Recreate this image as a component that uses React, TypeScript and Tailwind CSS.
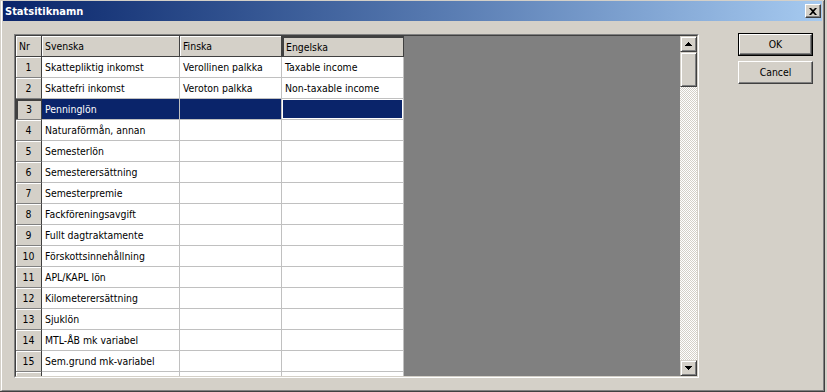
import React from "react";

const rows: [number, string, string, string][] = [
  [1, "Skattepliktig inkomst", "Verollinen palkka", "Taxable income"],
  [2, "Skattefri inkomst", "Veroton palkka", "Non-taxable income"],
  [3, "Penninglön", "", ""],
  [4, "Naturaförmån, annan", "", ""],
  [5, "Semesterlön", "", ""],
  [6, "Semesterersättning", "", ""],
  [7, "Semesterpremie", "", ""],
  [8, "Fackföreningsavgift", "", ""],
  [9, "Fullt dagtraktamente", "", ""],
  [10, "Förskottsinnehållning", "", ""],
  [11, "APL/KAPL lön", "", ""],
  [12, "Kilometerersättning", "", ""],
  [13, "Sjuklön", "", ""],
  [14, "MTL-ÅB mk variabel", "", ""],
  [15, "Sem.grund mk-variabel", "", ""],
  [16, "", "", ""],
];

function ScrollBtn({ dir }: { dir: "up" | "down" }) {
  return (
    <div className="w-[17px] h-[16px] bg-[#d4d0c8] border border-t-[#d4d0c8] border-l-[#d4d0c8] border-r-[#404040] border-b-[#404040] shadow-[inset_1px_1px_0_#fff,inset_-1px_-1px_0_#808080] flex items-center justify-center">
      <svg width="7" height="4" viewBox="0 0 7 4">
        {dir === "up" ? (
          <path d="M3 0h1v1h1v1h1v1h1v1H0V3h1V2h1V1h1z" fill="#000" />
        ) : (
          <path d="M0 0h7v1H6v1H5v1H4v1H3V3H2V2H1V1H0z" fill="#000" />
        )}
      </svg>
    </div>
  );
}

function Grid() {
  return (
    <div className="w-[685px] h-[344px] border-l border-t border-l-[#808080] border-t-[#808080] border-r border-b border-r-white border-b-white">
      <div className="w-full h-full border-l border-t border-l-[#404040] border-t-[#404040] border-r border-b border-r-[#d4d0c8] border-b-[#d4d0c8] flex">
        <div className="flex-1 h-full flex overflow-hidden">
          <div className="w-[388px] h-full overflow-hidden flex flex-col bg-white">
            <div className="flex h-[21px] shrink-0 text-black">
              <div className="w-[26px] h-full bg-[#d4d0c8] border-r border-b border-[#404040] shadow-[inset_1px_1px_0_#fff] flex items-center pl-[3px]">Nr</div>
              <div className="w-[138px] h-full bg-[#d4d0c8] border-r border-b border-[#404040] shadow-[inset_1px_1px_0_#fff] flex items-center pl-[3px]">Svenska</div>
              <div className="w-[102px] h-full bg-[#d4d0c8] border-r border-b border-[#404040] shadow-[inset_1px_1px_0_#fff] flex items-center pl-[3px]">Finska</div>
              <div className="w-[122px] h-full bg-[#d4d0c8] border-r border-b border-[#404040] shadow-[inset_2px_2px_0_#404040] flex items-center pl-[4px] pt-[2px]">Engelska</div>
            </div>
            {rows.map(([n, sv, fi, en]) => {
              const sel = n === 3;
              const label = n === 16 ? "" : String(n);
              return (
                <div key={n} className="flex h-[21px] shrink-0">
                  <div
                    className={
                      sel
                        ? "w-[26px] h-full bg-[#d4d0c8] border-r border-r-[#404040] border-b border-b-[#808080] shadow-[inset_2px_2px_0_#404040] flex items-center justify-center text-black pl-px"
                        : "w-[26px] h-full bg-[#d4d0c8] border-r border-r-[#404040] border-b border-b-[#808080] shadow-[inset_1px_1px_0_#fff] flex items-center justify-center text-black"
                    }
                  >
                    {label}
                  </div>
                  <div
                    className={
                      sel
                        ? "w-[138px] h-full bg-[#0a246a] text-white border-r border-b border-[#c0c0c0] flex items-center pl-[3px] whitespace-nowrap"
                        : "w-[138px] h-full bg-white text-black border-r border-b border-[#c0c0c0] flex items-center pl-[3px] whitespace-nowrap"
                    }
                  >
                    {sv}
                  </div>
                  <div
                    className={
                      sel
                        ? "w-[102px] h-full bg-[#0a246a] text-white border-r border-b border-[#c0c0c0] flex items-center pl-[3px] whitespace-nowrap"
                        : "w-[102px] h-full bg-white text-black border-r border-b border-[#c0c0c0] flex items-center pl-[3px] whitespace-nowrap"
                    }
                  >
                    {fi}
                  </div>
                  <div
                    className={
                      sel
                        ? "w-[122px] h-full bg-[#0a246a] text-white border-r border-b border-[#c0c0c0] shadow-[inset_0_0_0_1px_#fff] flex items-center pl-[3px] whitespace-nowrap"
                        : "w-[122px] h-full bg-white text-black border-r border-b border-[#c0c0c0] flex items-center pl-[3px] whitespace-nowrap"
                    }
                  >
                    {en}
                  </div>
                </div>
              );
            })}
          </div>
          <div className="flex-1 h-full bg-[#808080]" />
        </div>
        <div className="w-[17px] h-full flex flex-col">
          <ScrollBtn dir="up" />
          <div className="w-[17px] h-[35px] bg-[#d4d0c8] border border-t-[#d4d0c8] border-l-[#d4d0c8] border-r-[#404040] border-b-[#404040] shadow-[inset_1px_1px_0_#fff,inset_-1px_-1px_0_#808080]" />
          <div className="flex-1 bg-[image:repeating-conic-gradient(#d4d0c8_0%_25%,#ffffff_0%_50%)] bg-[length:2px_2px]" />
          <ScrollBtn dir="down" />
        </div>
      </div>
    </div>
  );
}

function Button({ label, def }: { label: string; def?: boolean }) {
  const inner = (
    <div className="w-full h-full bg-[#d4d0c8] border border-t-white border-l-white border-r-[#404040] border-b-[#404040] shadow-[inset_-1px_-1px_0_#808080] flex items-center justify-center text-black">
      {label}
    </div>
  );
  return def ? (
    <div className="w-[75px] h-[23px] border border-black">{inner}</div>
  ) : (
    <div className="w-[75px] h-[23px]">{inner}</div>
  );
}

export default function App() {
  return (
    <div className="w-[827px] h-[392px] bg-[#d4d0c8] overflow-hidden font-['DejaVu_Sans_Condensed','DejaVu_Sans',sans-serif] text-[10.4px] leading-none">
      <div className="w-[825px] h-[392px] border-r border-b border-[#404040] pl-px pt-px">
        <div className="w-full h-full border-l border-l-white border-r border-r-[#808080] border-b border-b-[#808080] px-px flex flex-col">
          <div className="h-[20px] shrink-0 bg-gradient-to-r from-[#0a246a] to-[#a6caf0] flex items-center justify-between pl-[2px] pr-[1px]">
            <span className="text-white font-bold text-[11px]">Statsitiknamn</span>
            <div className="w-[16px] h-[14px] bg-[#d4d0c8] border border-t-white border-l-white border-r-[#404040] border-b-[#404040] shadow-[inset_-1px_-1px_0_#808080] flex items-center justify-center">
              <svg width="8" height="7" viewBox="0 0 8 7">
                <path d="M0 0h2l2 2 2-2h2L5 3.5 8 7H6L4 5 2 7H0l3-3.5z" fill="#000" />
              </svg>
            </div>
          </div>
          <div className="flex items-start pl-[11px]">
            <div className="mt-[13px]">
              <Grid />
            </div>
            <div className="ml-[39px] mt-[12px] flex flex-col gap-[5px]">
              <Button label="OK" def />
              <Button label="Cancel" />
            </div>
          </div>
        </div>
      </div>
    </div>
  );
}
